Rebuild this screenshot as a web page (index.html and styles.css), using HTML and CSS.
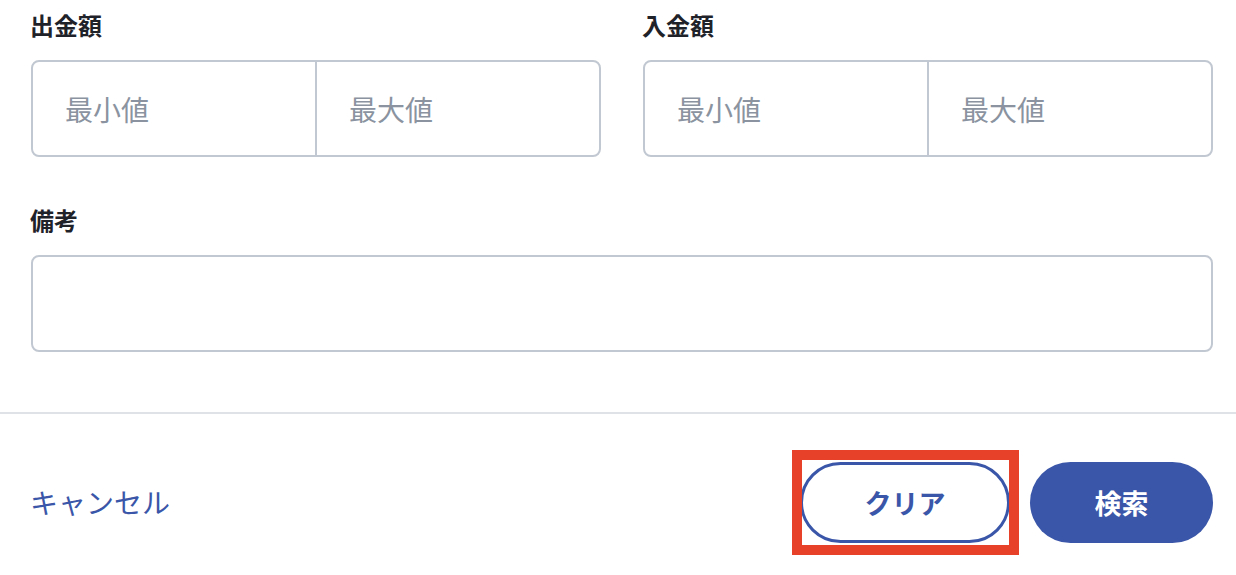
FILE: index.html
```html
<!DOCTYPE html>
<html lang="ja">
<head>
    <meta charset="UTF-8">
    <meta name="viewport" content="width=device-width, initial-scale=1.0">
    <title>検索条件</title>
    <link rel="stylesheet" href="styles.css">
</head>
<body>
<form class="search-form">
    <div class="form-body">
        <div class="form-row">
            <div class="form-group">
                <label class="field-label">出金額</label>
                <div class="range-box">
                    <input type="text" class="range-input" placeholder="最小値">
                    <input type="text" class="range-input" placeholder="最大値">
                </div>
            </div>
            <div class="form-group">
                <label class="field-label">入金額</label>
                <div class="range-box">
                    <input type="text" class="range-input" placeholder="最小値">
                    <input type="text" class="range-input" placeholder="最大値">
                </div>
            </div>
        </div>
        <div class="form-group memo-group">
            <label class="field-label" for="memo">備考</label>
            <input type="text" id="memo" class="memo-input">
        </div>
    </div>
    <div class="form-footer">
        <a href="#" class="cancel-link">キャンセル</a>
        <div class="footer-buttons">
            <button type="reset" class="btn btn-outline highlighted">クリア</button>
            <button type="submit" class="btn btn-primary">検索</button>
        </div>
    </div>
</form>
</body>
</html>
```

FILE: styles.css
```css
body { margin: 0; font-family: "Noto Sans CJK JP", "Noto Sans", sans-serif; color: #1f2329; background: #fff; }
.form-body { padding: 8px 23px 60px 31px; }
.form-row { display: flex; gap: 42px; }
.form-row .form-group { flex: 1; min-width: 0; }
.field-label { display: block; font-size: 24px; font-weight: bold; line-height: 34px; margin-bottom: 18px; margin-left: -1px; }
.range-box { display: flex; height: 97px; border: 2px solid #c2c8d1; border-radius: 8px; box-sizing: border-box; overflow: hidden; }
.range-input { flex: 1; width: 50%; min-width: 0; border: none; padding: 0 0 0 32px; font-family: inherit; font-size: 28px; color: #1f2329; outline: none; background: transparent; }
.range-input + .range-input { border-left: 2px solid #c2c8d1; }
.range-input::placeholder { color: #8a939f; }
.memo-group { margin-top: 46px; }
.memo-input { display: block; width: 100%; height: 97px; box-sizing: border-box; border: 2px solid #c2c8d1; border-radius: 8px; padding: 0 32px; font-family: inherit; font-size: 28px; outline: none; }
.form-footer { border-top: 2px solid #dfe2e6; display: flex; justify-content: space-between; align-items: center; padding: 48px 23px 32px 30px; }
.cancel-link { color: #3a56a8; text-decoration: none; font-size: 28px; line-height: 1; margin-top: -2px; }
.footer-buttons { display: flex; gap: 20px; }
.btn { height: 81px; border-radius: 41px; font-family: inherit; font-size: 27px; font-weight: bold; cursor: pointer; box-sizing: border-box; }
.btn-outline { width: 210px; background: #fff; color: #3a56a8; border: 3px solid #3a56a8; }
.btn-primary { width: 183px; background: #3a56a8; color: #fff; border: none; }
.highlighted { position: relative; }
.highlighted::after { content: ""; position: absolute; left: -11px; right: -12px; top: -15px; bottom: -15px; border: 10px solid #e8412a; }
```
